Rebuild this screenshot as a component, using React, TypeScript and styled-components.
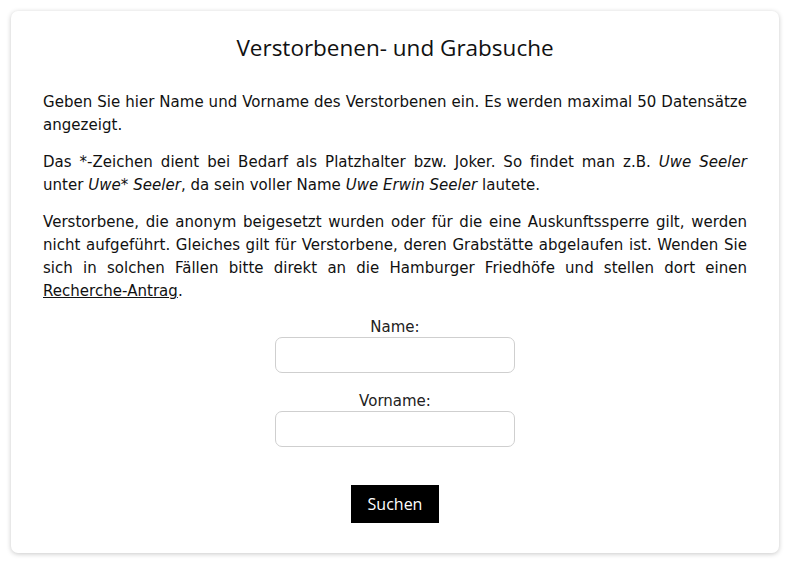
import React from "react";
import styled, { createGlobalStyle } from "styled-components";

const Global = createGlobalStyle`
  html, body { margin: 0; padding: 0; background: #ffffff; }
  body { font-family: "DejaVu Sans", Verdana, sans-serif; color: #111; }
`;

const Page = styled.div`
  padding: 11px 13px 8px 11px;
`;

const Card = styled.div`
  background: #fff;
  border-radius: 7px;
  box-shadow: 0 1px 5px rgba(0, 0, 0, 0.22);
  padding: 22px 32px 30px 32px;
  height: 542px;
  box-sizing: border-box;
`;

const Title = styled.h1`
  margin: 0 0 28px 0;
  text-align: center;
  font-family: "Open Sans", "Noto Sans", sans-serif;
  font-weight: 400;
  font-size: 22.5px;
  line-height: 30px;
  color: #111;
`;

const Para = styled.p`
  margin: 0 0 14px 0;
  font-size: 15px;
  letter-spacing: 0.03px;
  line-height: 23px;
  text-align: justify;
  color: #111;
`;

const Link = styled.a`
  color: #111;
  text-decoration: underline;
`;

const Form = styled.form`
  display: flex;
  flex-direction: column;
  align-items: center;
  margin-top: 12px;
`;

const Field = styled.div`
  display: flex;
  flex-direction: column;
  align-items: center;
  margin-bottom: 18px;
`;

const Label = styled.label`
  font-size: 15px;
  line-height: 20px;
  color: #222;
  margin-bottom: 0;
`;

const Input = styled.input`
  width: 240px;
  height: 36px;
  box-sizing: border-box;
  border: 1px solid #cfcfcf;
  border-radius: 7px;
  background: #fff;
  outline: none;
`;

const Button = styled.button`
  margin-top: 20px;
  width: 88px;
  height: 38px;
  background: #000;
  color: #fff;
  border: none;
  font-family: "Open Sans", "Noto Sans", sans-serif;
  font-size: 16px;
  cursor: pointer;
`;

export default function App() {
  return (
    <>
      <Global />
      <Page>
        <Card>
          <Title>Verstorbenen- und Grabsuche</Title>
          <Para>
            Geben Sie hier Name und Vorname des Verstorbenen ein. Es werden maximal 50 Datensätze angezeigt.
          </Para>
          <Para>
            Das *-Zeichen dient bei Bedarf als Platzhalter bzw. Joker. So findet man z.B. <i>Uwe Seeler</i> unter{" "}
            <i>Uwe* Seeler</i>, da sein voller Name <i>Uwe Erwin Seeler</i> lautete.
          </Para>
          <Para>
            Verstorbene, die anonym beigesetzt wurden oder für die eine Auskunftssperre gilt, werden nicht aufgeführt.
            Gleiches gilt für Verstorbene, deren Grabstätte abgelaufen ist. Wenden Sie sich in solchen Fällen bitte direkt
            an die Hamburger Friedhöfe und stellen dort einen <Link href="#">Recherche-Antrag</Link>.
          </Para>
          <Form onSubmit={(e) => e.preventDefault()}>
            <Field>
              <Label htmlFor="name">Name:</Label>
              <Input id="name" type="text" />
            </Field>
            <Field>
              <Label htmlFor="vorname">Vorname:</Label>
              <Input id="vorname" type="text" />
            </Field>
            <Button type="submit">Suchen</Button>
          </Form>
        </Card>
      </Page>
    </>
  );
}
